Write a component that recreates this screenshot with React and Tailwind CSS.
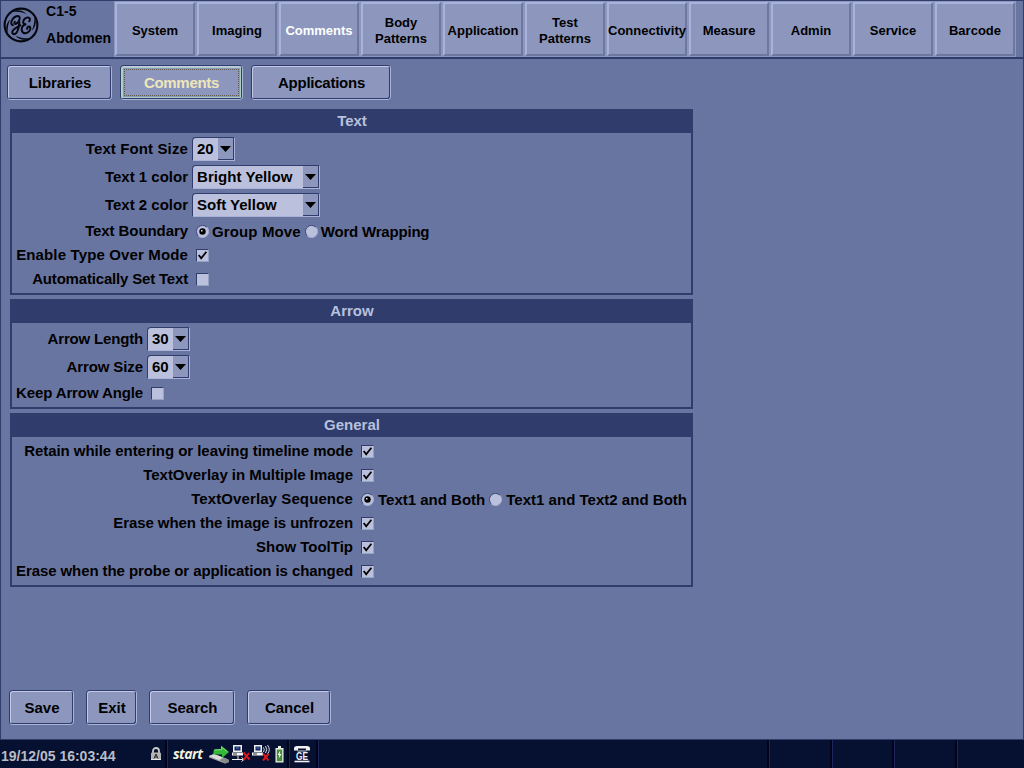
import React from "react";

const NAV = [
  ["System"],
  ["Imaging"],
  ["Comments"],
  ["Body", "Patterns"],
  ["Application"],
  ["Test", "Patterns"],
  ["Connectivity"],
  ["Measure"],
  ["Admin"],
  ["Service"],
  ["Barcode"],
];

const BARB = "M9.500 4.500C13 2.500 20 2.500 23.500 7.200 19.500 5 14.500 4.600 9.500 4.500z";

function Logo() {
  return (
    <svg width="36" height="36" viewBox="0 0 36 36" fill="none" stroke="#05070f" strokeLinecap="round">
      <circle cx="18" cy="18" r="16.400" strokeWidth="2.100" />
      <g fill="#05070f" stroke="none">
        <path d={BARB} />
        <path d={BARB} transform="rotate(90 18 18)" />
        <path d={BARB} transform="rotate(180 18 18)" />
        <path d={BARB} transform="rotate(270 18 18)" />
      </g>
      <g strokeWidth="1.900" transform="translate(-0.900 -1) scale(1.060)">
        <path d="M10.200 18.200c-2-.4-2-3.200-.5-5.500 1.700-2.600 4.800-4 6.300-2.800 1.500 1.300.2 4.700-2.200 6.500-1.500 1.100-2.800.2-1.900-1.600M16.300 15.300c-.4 4.600-1.500 9.300-3.700 10.800-1.600 1.100-3.400.1-3-1.800.5-2.400 3.900-4.200 7.600-6" />
        <path d="M25.600 14.400c1.200-1.400.7-3.400-1-3.600-2.300-.3-4.800 2.300-4.700 4.500.1 1.500 1.200 2.200 3 1.900-2.900.5-4.600 2.700-4.400 5.300.2 2.300 2 3.700 4.200 3.100 2.700-.8 4.600-3.500 3.800-5.300-.7-1.500-3.100-.7-2.900 1.200" />
      </g>
    </svg>
  );
}

function NavTab({ lines, active }) {
  return (
    <button
      className={
        "flex h-[54px] w-20 shrink-0 flex-col items-center justify-center border-2 border-t-[#a9b2da] border-l-[#a9b2da] border-r-[#6d78a1] border-b-[#6d78a1] bg-[#8d97be] pt-[3px] text-[13px] leading-4 whitespace-nowrap " +
        (active ? "text-white" : "text-black")
      }
    >
      {lines.map((l) => (
        <span key={l}>{l}</span>
      ))}
    </button>
  );
}

function PushButton({ children, className, active }) {
  return (
    <button
      className={
        "h-[35px] rounded-[4px] border border-t-[#2f3c6c] border-l-[#2f3c6c] border-r-[#aab4dc] border-b-[#aab4dc] " +
        className
      }
    >
      <span
        className={
          "flex h-full w-full items-center justify-center rounded-[3px] border border-t-[#c3c9e6] border-l-[#c3c9e6] border-r-[#2f3c6c] border-b-[#2f3c6c] bg-[#8d97be] text-[15px] leading-none " +
          (active ? "text-[#efe6ba]" : "pl-px text-black")
        }
      >
        {active ? (
          <span className="flex h-full w-full items-center justify-center border border-[#a9cfc0] p-px">
            <span className="flex h-full w-full items-center justify-center border border-dotted border-[#5c5a4c]">
              {children}
            </span>
          </span>
        ) : (
          children
        )}
      </span>
    </button>
  );
}

function Select({ value, className }) {
  return (
    <div
      className={
        "ml-1 flex h-6 rounded-tl-[4px] rounded-tr-[2px] border border-t-[#2f3c6c] border-l-[#2f3c6c] border-r-[#a9b2d6] border-b-[#a9b2d6] bg-[#bbc1dc] " +
        className
      }
    >
      <span className="flex-1 pl-1 leading-[22px] whitespace-nowrap">{value}</span>
      <span className="flex w-4 items-center justify-center border-r border-b border-[#2f3c6c] bg-[#8d97be]">
        <svg width="11" height="6" viewBox="0 0 11 6">
          <path d="M0 0h11L5.500 6z" fill="#000" />
        </svg>
      </span>
    </div>
  );
}

function Checkbox({ checked }) {
  return (
    <span className="mt-px ml-2 flex h-[13px] w-[13px] border border-t-[#2f3c6c] border-l-[#2f3c6c] border-r-[#98a1c6] border-b-[#98a1c6] bg-[#bbc1dc]">
      {checked && (
        <svg width="11" height="11" viewBox="0 0 11 11" fill="none" stroke="#000" strokeWidth="1.800">
          <path d="M1.700 5l2.500 3.300L9.400 1.700" />
        </svg>
      )}
    </span>
  );
}

function Radio({ checked, label, className, labelClass }) {
  return (
    <span className={"flex items-center " + className}>
      <svg width="13" height="13" viewBox="0 0 13 13" className="mt-px">
        <circle cx="6.500" cy="6.500" r="6" fill="#bbc1dc" />
        <path d="M2.200 10.800A6 6 0 0 1 10.800 2.200" fill="none" stroke="#3d4978" />
        <path d="M2.200 10.800A6 6 0 0 0 10.800 2.200" fill="none" stroke="#a9b2d6" />
        {checked && <circle cx="6.500" cy="6.500" r="3.200" fill="#000" />}
        {checked && <rect x="5" y="5" width="1.500" height="1.500" fill="#dfe3f2" />}
      </svg>
      <span className={"mt-[2px] whitespace-nowrap " + labelClass}>{label}</span>
    </span>
  );
}

function Row({ label, labelClass, tall, children }) {
  return (
    <div className={"flex items-center " + (tall ? "h-7" : "h-6")}>
      <span className={"shrink-0 text-right whitespace-nowrap " + labelClass}>{label}</span>
      {children}
    </div>
  );
}

function Panel({ title, children }) {
  return (
    <section className="w-[683px] border-2 border-t-0 border-[#2f3c6c]">
      <h2 className="h-6 bg-[#2f3c6c] pt-px pl-px text-center leading-[22px] text-[#b9c0dd]">{title}</h2>
      <div className="py-[2px]">{children}</div>
    </section>
  );
}

function Separator() {
  return <span className="h-7 w-[3px] shrink-0 border-r border-[#1c2658] bg-[#01031a]" />;
}

function LockIcon() {
  return (
    <svg width="12" height="14" viewBox="0 0 12 14">
      <path d="M3 6V4a3 3 0 0 1 6 0v2" fill="none" stroke="#c9c9c9" strokeWidth="1.800" />
      <rect x="1" y="5.500" width="10" height="7.500" rx="1" fill="#b4b4b4" />
      <path d="M4 11.500L6 7l2 4.500M4.800 10h2.400" fill="none" stroke="#222" />
      <path d="M1 12.500h10" stroke="#e6e6e6" />
    </svg>
  );
}

function EjectIcon() {
  return (
    <svg width="23" height="20" viewBox="0 0 23 20">
      <path d="M1 12l5-2 11 4 4 2v2l-4 1.500L1 13.500z" fill="#a5a8a6" />
      <path d="M1 12l5-2 9 3.500-4 2.500z" fill="#dcdedb" />
      <path d="M12 16l5-2 4 2v2l-4 1.500z" fill="#85898a" />
      <path d="M6 5.500l7-.500V1.500L21 8l-7 6v-3.500L5 10.500z" fill="#35b83a" />
      <path d="M6.500 6l7-.5V3l6 4.800" fill="none" stroke="#7be06f" />
    </svg>
  );
}

function WiredIcon() {
  return (
    <svg width="20" height="20" viewBox="0 0 20 20">
      <rect x="2" y="1" width="9" height="7" fill="#eee" />
      <rect x="3.500" y="2.500" width="6" height="4" fill="#14245c" />
      <path d="M5 4h3" stroke="#4d7bd8" />
      <path d="M1 8.500h11v3H1z" fill="#f4f4f4" />
      <path d="M2 10h4" stroke="#333" />
      <path d="M7 11.500v4M1 15.500h12M10.500 13.500l2.500 2-2.500 2" fill="none" stroke="#eee" />
      <path d="M12.500 8.500l6 7M18 9l-5.500 7" stroke="#e0151d" strokeWidth="2" />
    </svg>
  );
}

function WirelessIcon() {
  return (
    <svg width="20" height="20" viewBox="0 0 20 20">
      <rect x="3" y="1" width="8" height="7" fill="#eee" />
      <rect x="4.500" y="2.500" width="5" height="4" fill="#14245c" />
      <path d="M5.500 4h3" stroke="#4d7bd8" />
      <path d="M1 8.500h11v3H1z" fill="#f4f4f4" />
      <path d="M2 10h4" stroke="#333" />
      <path d="M12.500 3.500q1.500 2 0 4.500M14.500 2q2.500 3.500 0 7M16.500 1q3.500 4.500 0 9" fill="none" stroke="#d8dbe6" />
      <path d="M12 9.500l5.500 7M17.500 10L12 16.500" stroke="#e0151d" strokeWidth="2" />
    </svg>
  );
}

function BatteryIcon() {
  return (
    <svg width="9" height="17" viewBox="0 0 9 17">
      <path d="M3 0h3v2h2.500v14.500h-8V2H3z" fill="#e9efe4" />
      <path d="M1.800 3.500h5.400v11.700H1.800z" fill="#4b8c3d" />
      <path d="M5.200 4.500L2.800 9h1.500l-.6 3.500L6.400 8H4.700z" fill="#fff" />
    </svg>
  );
}

function PhoneIcon() {
  return (
    <svg width="18" height="18" viewBox="0 0 18 18">
      <path d="M1 5.500V3.500Q1 1 4 1h10q3 0 3 2.500v2h-4V3.500H5v2z" fill="#f2f2f2" />
      <path d="M4.500 6h9" stroke="#cfd2da" fill="none" />
      <path d="M1.500 16.500h15" stroke="#f2f2f2" strokeWidth="1.600" />
      <text x="9" y="14.800" textAnchor="middle" fontFamily="Liberation Sans, sans-serif" fontSize="10" textLength="12" lengthAdjust="spacingAndGlyphs" fontWeight="700" fill="#f2f2f2">
        GE
      </text>
    </svg>
  );
}

export default function App() {
  return (
    <div className="flex h-[768px] w-[1024px] flex-col overflow-hidden bg-[#6975a1] font-['Liberation_Sans',Arial,sans-serif] text-[15px] leading-4 font-bold text-black">
      <div className="flex h-[740px] flex-col border border-[#2f3c6c]">
        <header className="flex h-[58px] shrink-0 border-b-2 border-[#2f3c6c]">
          <div className="flex w-[113px] shrink-0">
            <div className="pt-[6px] pl-[2px]">
              <Logo />
            </div>
            <div className="pt-[2px] pl-[7px] text-[14px] tracking-[0.1px]">
              <p>C1-5</p>
              <p className="mt-[11px]">Abdomen</p>
            </div>
          </div>
          <nav className="flex w-[902px] gap-[2px] bg-[#8d97be] pt-px pl-px">
            {NAV.map((lines) => (
              <NavTab key={lines.join(" ")} lines={lines} active={lines[0] === "Comments"} />
            ))}
          </nav>
        </header>

        <div className="mt-[6px] ml-[6px] flex gap-2">
          <PushButton className="w-[105px] tracking-[-0.1px]">Libraries</PushButton>
          <PushButton className="w-[123px] tracking-[-0.3px]" active>
            Comments
          </PushButton>
          <PushButton className="w-[140px] tracking-[-0.25px]">Applications</PushButton>
        </div>

        <main className="mt-[9px] ml-[9px] flex flex-1 flex-col gap-1">
          <Panel title="Text">
            <Row label="Text Font Size" labelClass="w-[176px] tracking-[0.12px]" tall>
              <Select value="20" className="w-[43px]" />
            </Row>
            <Row label="Text 1 color" labelClass="w-[176px]" tall>
              <Select value="Bright Yellow" className="w-[128px] tracking-[0.06px]" />
            </Row>
            <Row label="Text 2 color" labelClass="w-[176px]" tall>
              <Select value="Soft Yellow" className="w-[128px]" />
            </Row>
            <Row label="Text Boundary" labelClass="w-[176px] tracking-[-0.08px]">
              <Radio checked label="Group Move" className="ml-2" labelClass="ml-[3px] tracking-[0.13px]" />
              <Radio label="Word Wrapping" className="ml-1" labelClass="ml-[3px] tracking-[-0.2px]" />
            </Row>
            <Row label="Enable Type Over Mode" labelClass="w-[176px] tracking-[0.14px]">
              <Checkbox checked />
            </Row>
            <Row label="Automatically Set Text" labelClass="w-[176px] tracking-[-0.18px]">
              <Checkbox />
            </Row>
          </Panel>

          <Panel title="Arrow">
            <Row label="Arrow Length" labelClass="w-[131px] tracking-[-0.17px]" tall>
              <Select value="30" className="w-[43px]" />
            </Row>
            <Row label="Arrow Size" labelClass="w-[131px] tracking-[-0.1px]" tall>
              <Select value="60" className="w-[43px]" />
            </Row>
            <Row label="Keep Arrow Angle" labelClass="w-[131px] tracking-[-0.12px]">
              <Checkbox />
            </Row>
          </Panel>

          <Panel title="General">
            <Row label="Retain while entering or leaving timeline mode" labelClass="w-[341px] tracking-[-0.045px]">
              <Checkbox checked />
            </Row>
            <Row label="TextOverlay in Multiple Image" labelClass="w-[341px] tracking-[-0.03px]">
              <Checkbox checked />
            </Row>
            <Row label="TextOverlay Sequence" labelClass="w-[341px] tracking-[0.1px]">
              <Radio checked label="Text1 and Both" className="ml-2" labelClass="ml-1" />
              <Radio label="Text1 and Text2 and Both" className="ml-1" labelClass="ml-1 tracking-[0.02px]" />
            </Row>
            <Row label="Erase when the image is unfrozen" labelClass="w-[341px] tracking-[-0.06px]">
              <Checkbox checked />
            </Row>
            <Row label="Show ToolTip" labelClass="w-[341px]">
              <Checkbox checked />
            </Row>
            <Row label="Erase when the probe or application is changed" labelClass="w-[341px] tracking-[-0.085px]">
              <Checkbox checked />
            </Row>
          </Panel>
        </main>

        <div className="mb-[14px] ml-2 flex gap-3">
          <PushButton className="w-[65px]">Save</PushButton>
          <PushButton className="w-[51px]">Exit</PushButton>
          <PushButton className="w-[86px]">Search</PushButton>
          <PushButton className="w-[84px]">Cancel</PushButton>
        </div>
      </div>

      <footer className="flex h-7 shrink-0 items-center bg-[#061031] text-[#b9bcc4]">
        <span className="w-[150px] shrink-0 pt-1 pl-px text-[14px]">19/12/05 16:03:44</span>
        <span className="w-[15px] shrink-0">
          <LockIcon />
        </span>
        <Separator />
        <span className="w-[40px] shrink-0 pl-[5px] font-['Open_Sans','Noto_Sans',sans-serif] text-[14px] tracking-[-0.6px] text-[#f3f2dc] italic">
          start
        </span>
        <EjectIcon />
        <WiredIcon />
        <WirelessIcon />
        <span className="ml-1 w-3 shrink-0">
          <BatteryIcon />
        </span>
        <Separator />
        <span className="w-[26px] shrink-0 pl-[3px]">
          <PhoneIcon />
        </span>
        <Separator />
        <span className="flex-1" />
        <Separator />
        <span className="w-[60px]" />
        <Separator />
        <span className="w-[59px]" />
        <Separator />
        <span className="w-[60px]" />
        <Separator />
        <span className="w-[66px]" />
      </footer>
    </div>
  );
}
